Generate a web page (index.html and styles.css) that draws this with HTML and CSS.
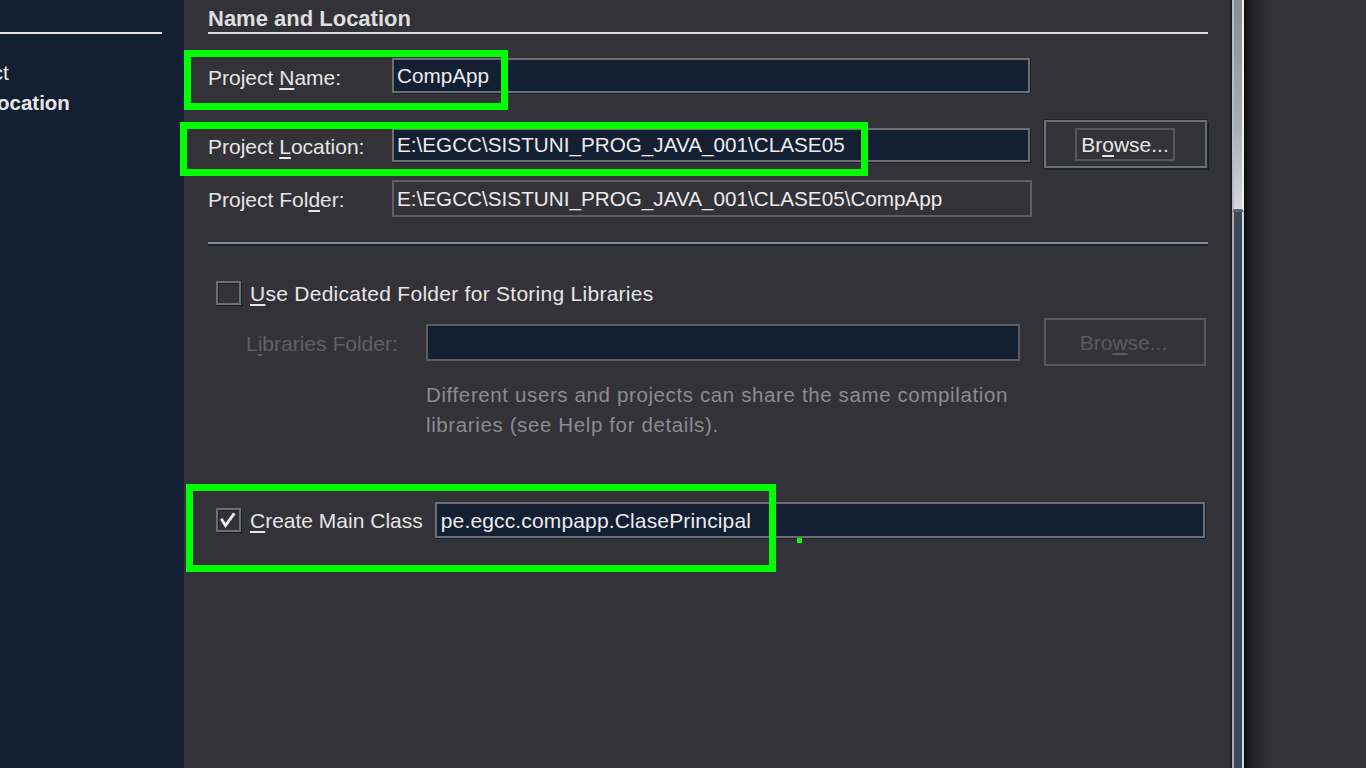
FILE: index.html
```html
<!DOCTYPE html>
<html>
<head>
<meta charset="utf-8">
<link rel="stylesheet" href="styles.css">
</head>
<body>
<aside class="steps">
  <div class="steps-head"></div>
  <ol class="steps-list">
    <li class="step">1.&nbsp;Choose Project</li>
    <li class="step current">2.&nbsp;Name and Location</li>
  </ol>
</aside>

<main class="panel">
  <h2 class="section-title">Name and Location</h2>

  <div class="row row-name">
    <label class="label">Project <u>N</u>ame:</label>
    <div class="field">CompApp</div>
  </div>

  <div class="row row-loc">
    <label class="label">Project <u>L</u>ocation:</label>
    <div class="field">E:\EGCC\SISTUNI_PROG_JAVA_001\CLASE05</div>
    <button class="btn"><span class="btn-focus">Br<u>o</u>wse...</span></button>
  </div>

  <div class="row row-folder">
    <label class="label">Project Fol<u>d</u>er:</label>
    <div class="field field-ro">E:\EGCC\SISTUNI_PROG_JAVA_001\CLASE05\CompApp</div>
  </div>

  <div class="separator"></div>

  <div class="check-row check-dedicated">
    <span class="checkbox"></span>
    <span class="check-label label-wide"><u>U</u>se Dedicated Folder for Storing Libraries</span>
  </div>

  <div class="row row-libs">
    <label class="label label-disabled">L<u>i</u>braries Folder:</label>
    <div class="field field-libs"></div>
    <button class="btn btn-disabled"><span class="btn-text">Bro<u>w</u>se...</span></button>
  </div>

  <p class="help">Different users and projects can share the same compilation<br>libraries (see Help for details).</p>

  <div class="check-row check-main">
    <span class="checkbox checked"><svg width="21" height="20" viewBox="0 0 21 20"><path d="M4 10 L7.5 15.5 L15.5 4.5" fill="none" stroke="#f0f0f0" stroke-width="2.8" stroke-linecap="square" stroke-linejoin="miter"/></svg></span>
    <span class="check-label"><u>C</u>reate Main Class</span>
    <div class="field field-main">pe.egcc.compapp.ClasePrincipal</div>
  </div>
</main>

<div class="scrollbar">
  <div class="thumb"></div>
  <div class="track"></div>
</div>
<div class="backdrop"></div>

<div class="mark mark-name"></div>
<div class="mark mark-loc"></div>
<div class="mark mark-main"></div>
<div class="mark-dot"></div>
</body>
</html>
```

FILE: styles.css
```css
html, body {
  margin: 0;
  padding: 0;
}
body {
  position: relative;
  width: 1366px;
  height: 768px;
  overflow: hidden;
  display: flex;
  background: #333238;
  font-family: "Liberation Sans", Arial, sans-serif;
  font-size: 21px;
  color: #e6e6e6;
}
u {
  text-decoration-thickness: 2px;
  text-underline-offset: 3px;
}

/* Sidebar */
.steps {
  width: 184px;
  flex: none;
  background: #131f33;
  overflow: hidden;
}
.steps-head {
  margin-top: 32px;
  width: 162px;
  height: 2px;
  background: #e2e2e2;
}
.steps-list {
  list-style: none;
  margin: 24px 0 0 -150px;
  padding: 0;
  white-space: nowrap;
}
.step {
  height: 30px;
  line-height: 30px;
  color: #e8e8e8;
}
.step:first-child {
  margin-left: -8px;
}
.step.current {
  font-weight: bold;
  font-size: 20.5px;
  margin-left: 8px;
}

/* Main panel */
.panel {
  width: 1046px;
  flex: none;
  box-sizing: border-box;
  padding: 0 22px 0 24px;
  background: #333238;
}
.section-title {
  margin: 0;
  height: 32px;
  line-height: 38px;
  font-size: 22px;
  font-weight: bold;
  color: #dedede;
  border-bottom: 2px solid #dcdcdc;
}

.row {
  display: flex;
  align-items: center;
}
.label {
  width: 184px;
  flex: none;
  white-space: nowrap;
}
.field {
  box-sizing: border-box;
  width: 638px;
  height: 35px;
  flex: none;
  background: #131f33;
  border: 2px solid #6e6e6e;
  box-shadow: 1px 1px 0 #131f33;
  padding-left: 3px;
  line-height: 31px;
  white-space: nowrap;
  overflow: hidden;
  color: #ececec;
  font-size: 20.7px;
}
.field-ro {
  background: #333238;
  border-color: #5e5e5e;
  box-shadow: none;
  height: 37px;
  width: 640px;
  line-height: 33px;
}

.row-name {
  margin-top: 24px;
  height: 35px;
}
.row-name .label { padding-top: 5px; }
.row-loc {
  margin-top: 27px;
  height: 48px;
}
.row-loc .field { height: 34px; line-height: 30px; margin-top: 2px; }
.row-loc .label { padding-top: 5px; }
.row-folder {
  margin-top: 12px;
  height: 37px;
}
.row-folder .label { padding-top: 3px; }

.btn {
  box-sizing: border-box;
  margin-left: 14px;
  width: 163px;
  height: 48px;
  flex: none;
  background: #333238;
  border: 2px solid #6e6e6e;
  box-shadow: 0 0 0 1px #1a2436, 2px 2px 0 #131f33;
  display: flex;
  align-items: center;
  justify-content: center;
  padding: 0;
  font: inherit;
  color: #e6e6e6;
}
.btn-focus {
  box-sizing: border-box;
  width: 100px;
  height: 33px;
  border: 2px solid #55555a;
  line-height: 30px;
  text-align: center;
  white-space: nowrap;
  margin-left: -1px;
}

.separator {
  margin-top: 25px;
  height: 2px;
  background: #8a8a8e;
  border-bottom: 2px solid #16213a;
}

.check-row {
  display: flex;
  align-items: center;
}
.check-dedicated {
  margin-top: 35px;
  height: 24px;
  margin-left: 8px;
}
.checkbox {
  box-sizing: border-box;
  width: 25px;
  height: 24px;
  flex: none;
  border: 2px solid #6e6e6e;
  box-shadow: inset 1px 1px 0 #1a2436, 1px 1px 0 #131f33;
  display: flex;
  align-items: center;
  justify-content: center;
}
.check-label {
  margin-left: 9px;
  white-space: nowrap;
  padding-top: 2px;
}
.label-wide {
  letter-spacing: 0.27px;
}

.row-libs {
  margin-top: 13px;
  height: 48px;
}
.label-disabled {
  color: #606064;
  padding-left: 38px;
  width: 218px;
  box-sizing: border-box;
  padding-top: 4px;
}
.field-libs {
  width: 594px;
  height: 37px;
  border-color: #5e5e5e;
  box-shadow: none;
}
.btn-disabled {
  margin-left: 24px;
  width: 162px;
  height: 48px;
  border-color: #58585c;
  box-shadow: none;
  color: #5a5a5e;
}
.btn-text { margin-left: -3px; padding-top: 2px; }

.help {
  margin: 14px 0 0 218px;
  line-height: 30px;
  font-size: 20.5px;
  letter-spacing: 0.62px;
  color: #8c8c90;
}

.check-main {
  margin-top: 62px;
  margin-left: 8px;
  height: 36px;
}
.check-main .check-label {
  margin-left: 9px;
}
.field-main {
  width: 770px;
  height: 36px;
  margin-left: 12px;
  line-height: 33px;
  padding-left: 4px;
  font-size: 21px;
  letter-spacing: 0.15px;
}

/* Scrollbar */
.scrollbar {
  width: 14px;
  flex: none;
  box-sizing: border-box;
  border-left: 2px solid #1c2024;
  display: flex;
  flex-direction: column;
  background: #3e4a5a;
}
.thumb {
  height: 209px;
  flex: none;
  border-left: 2px solid #b8bcc2;
  border-right: 2px solid #f0f0f0;
  border-bottom: 3px solid #5c636c;
  background: linear-gradient(#878d96, #a9adb3 60%, #d5d7da);
}
.track {
  flex: 1;
  border-left: 2px solid #a4acb4;
  border-right: 2px solid #d4d8dc;
  background: #3e4a5a;
}
.backdrop {
  flex: 1;
  background: linear-gradient(90deg, #0c0c0e 0, #1a1a1d 4px, #2a2a2e 16px, #333238 28px);
}

/* Annotation highlights */
.mark {
  position: absolute;
  box-sizing: border-box;
  border: 7px solid #00ff00;
}
.mark-name {
  left: 184px;
  top: 50px;
  width: 324px;
  height: 60px;
}
.mark-loc {
  left: 180px;
  top: 122px;
  width: 688px;
  height: 54px;
}
.mark-main {
  left: 186px;
  top: 484px;
  width: 590px;
  height: 88px;
}
.mark-dot {
  position: absolute;
  left: 797px;
  top: 538px;
  width: 5px;
  height: 5px;
  background: #00ff00;
}
```
